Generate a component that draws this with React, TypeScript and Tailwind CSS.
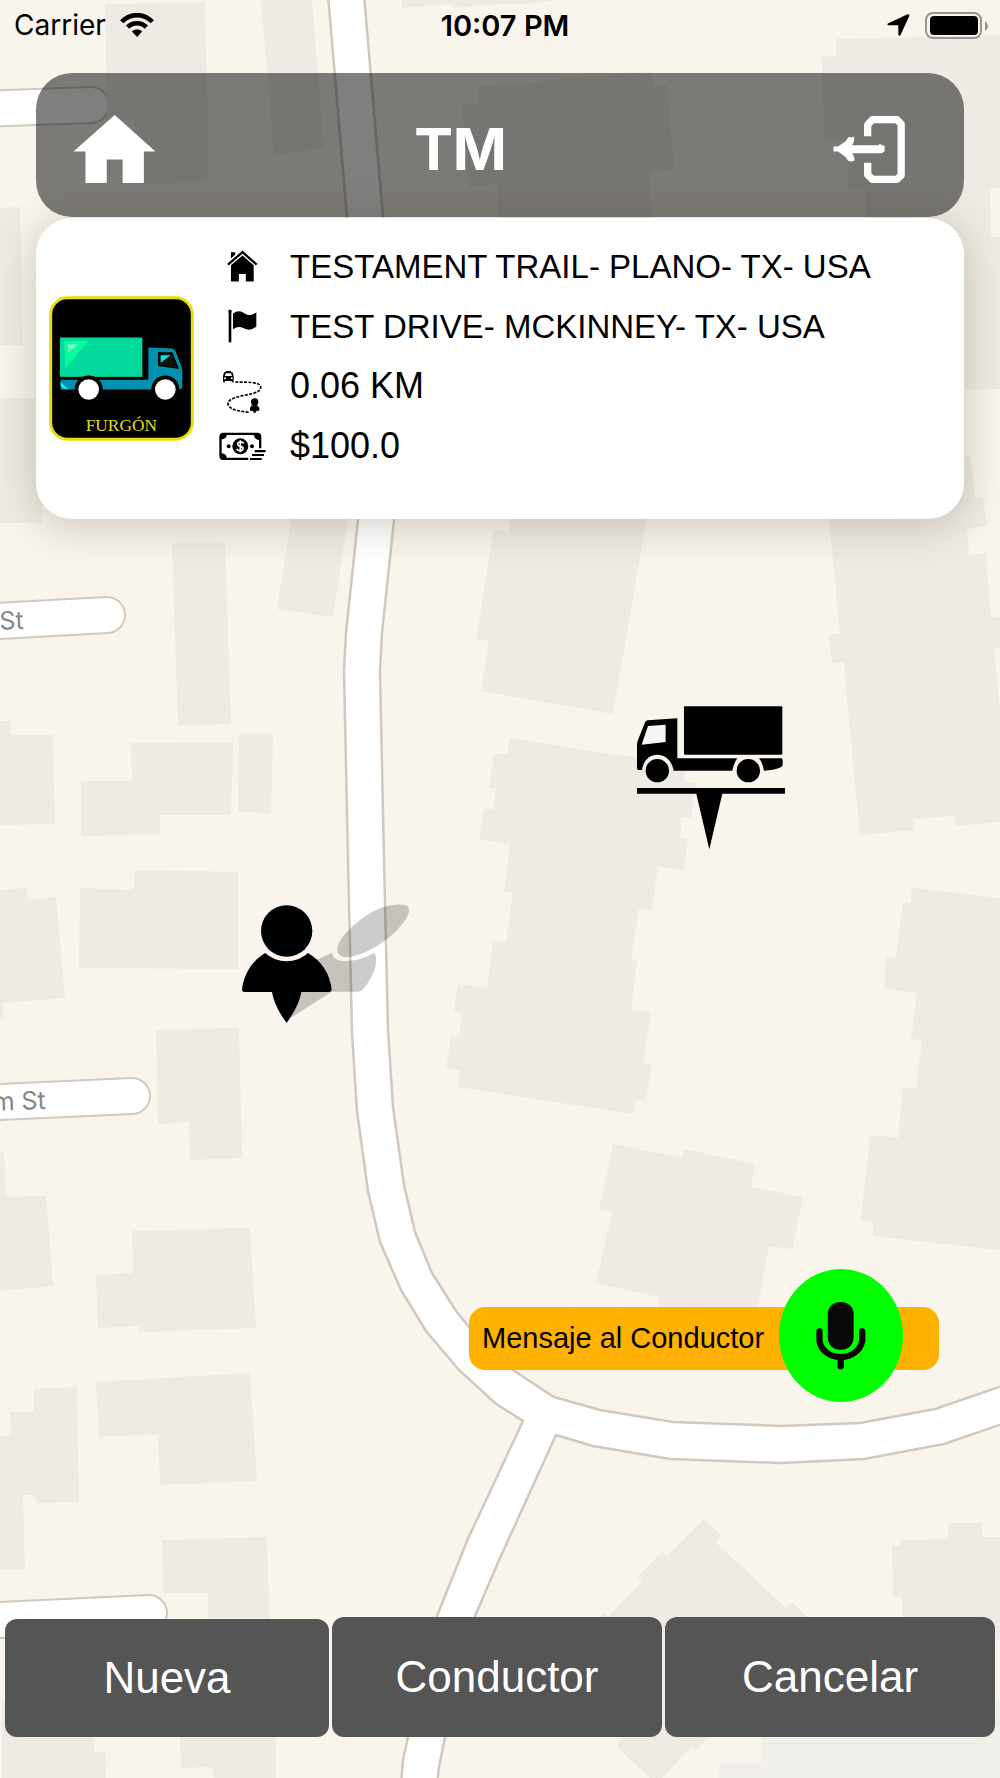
import type { ReactNode } from "react";

const BUILDINGS = [
  "105,4 205,2 209,182 136,184 134,119 107,120",
  "261,0 312,0 324,149 274,155",
  "0,208 20,207 23,345 0,345",
  "0,398 40,398 42,523 0,523",
  "402,0 402,8 452,4 453,8 484,5 535,3 555,0",
  "478,87 652,71 654,87 667,85 674,169 650,172 653,240 500,240 498,184 469,187 462,105 479,104",
  "836,39 1000,35 1000,188 990,189 991,237 1000,237 1000,389 865,389 865,189 849,190 848,139 824,139 822,57 836,56",
  "825,456 971,456 975,497 983,497 987,526 967,529 969,555 986,553 991,618 1000,617 1000,647 994,648 1000,710 1000,822 956,826 954,816 913,819 914,830 860,835 848,710 844,662 832,663 829,635 840,633 829,520",
  "494,530 509,532 511,510 648,510 613,714 481,691 489,641 476,639",
  "172,543 225,542 231,724 178,726",
  "293,510 349,510 333,617 277,609",
  "0,721 11,721 11,735 53,735 55,824 0,825",
  "131,743 233,742 231,815 160,815 160,834 81,836 81,781 132,781",
  "239,733 273,734 271,813 238,812",
  "80,888 134,890 135,870 238,872 238,969 79,968",
  "0,890 27,888 28,900 56,897 65,998 3,1003 3,1019 0,1019",
  "156,1030 239,1028 242,1158 190,1160 189,1122 158,1124",
  "509,738 637,758 686,766 684,781 696,783 691,818 682,817 680,838 688,839 684,870 658,866 652,910 639,909 631,959 637,960 631,1010 651,1012 643,1063 652,1064 646,1101 636,1100 633,1114 458,1087 460,1070 446,1068 451,1036 459,1036 463,1013 454,1012 458,984 487,988 493,941 506,943 513,892 504,891 510,844 479,839 484,808 493,810 496,789 489,788 494,754 508,754",
  "912,888 1000,898 1000,1250 873,1236 873,1222 861,1221 870,1135 898,1138 903,1088 916,1089 922,1040 911,1039 917,993 884,989 886,957 896,958 903,903 910,903",
  "613,1144 683,1158 684,1149 755,1164 751,1187 803,1197 792,1249 769,1246 756,1317 656,1317 659,1297 596,1283 612,1212 599,1210",
  "704,1519 721,1535 715,1542 786,1608 792,1602 830,1640 709,1737 696,1751 691,1747 662,1778 650,1778 617,1747 622,1737 590,1626 603,1613 608,1617 642,1582 637,1577 662,1552 667,1556",
  "948,1523 982,1523 982,1537 1000,1537 1000,1640 902,1640 902,1597 893,1597 892,1546 901,1546 900,1540 948,1539",
  "0,1152 4,1152 6,1197 46,1196 53,1286 0,1291",
  "132,1231 250,1228 256,1328 139,1332 139,1326 98,1328 96,1275 133,1273",
  "96,1382 250,1373 257,1481 160,1485 158,1434 99,1437",
  "34,1389 77,1387 79,1502 36,1503 35,1495 23,1495 25,1570 0,1570 0,1436 11,1436 10,1412 34,1412",
  "162,1540 267,1537 270,1640 208,1640 208,1593 163,1593",
  "2,1700 94,1700 94,1752 105,1752 106,1778 2,1778",
  "179,1700 275,1700 276,1778 214,1778 212,1767 181,1768",
];

const SIDE_STREETS = [
  "M-20 109 L91 105",
  "M-20 622 L107 615",
  "M-20 1103 L132 1096",
  "M-20 1621 L149 1613",
];

const MAIN_ROAD =
  "M328 -5 L347 217 L361 450 L358 520 L346 633 L344 671 L348 860 L352 1033 L357 1111 L368 1191 L380 1242 L401 1290 L426 1331 L459 1370 L495 1403 L523 1421 L467 1541 L437 1616 L408 1737 L403 1760 L401 1785 L437 1785 L439 1767 L445 1737 L475 1616 L500 1558 L556 1435 L593 1446 L670 1459 L781 1463 L864 1459 L944 1444 L1005 1423 L1005 1385 L935 1409 L860 1423 L781 1426 L673 1422 L600 1410 L554 1397 L513 1370 L469 1327 L456 1311 L432 1273 L415 1232 L404 1185 L393 1107 L388 1030 L384 860 L380 671 L382 633 L394 520 L398 450 L383 217 L364 -5 Z";

function PassengerPin() {
  return (
    <g transform="translate(200 860) scale(0.3333)">
      <g fill="#000" fillOpacity="0.2">
        <path d="M412 268 C414 240 450 200 497 168 C540 138 590 128 618 136 C640 148 620 180 590 212 C550 250 490 288 440 292 C420 292 412 282 412 268 Z" />
        <path d="M352 298 L396 278 C400 296 412 304 440 303 C470 302 500 292 522 279 C532 290 530 310 522 334 C512 358 498 378 490 388 Q484 395 472 395 H394 L272 474 L300 396 Z" />
      </g>
      <circle cx="260" cy="213" r="77" fill="#000103" />
      <path d="M196 279 C232 312 288 312 324 279 C364 302 390 342 395 388 Q395 396 387 396 H304 C298 430 280 460 260 489 C240 462 222 430 216 396 H134 Q126 396 126 388 C132 342 156 302 196 279 Z" fill="#000103" />
    </g>
  );
}

function TruckPin() {
  return (
    <g transform="translate(500 680) scale(0.3333)">
      <rect x="552" y="79" width="295" height="145" rx="3" />
      <path d="M443 121 L532 115 V235 H712 Q702 248 697 272 H521 C516 244 498 224 472 224 C446 224 430 244 426 270 H416 Q411 270 411 264 V196 Q411 186 415 178 L434 130 Q437 121 443 121 Z" />
      <path d="M777 235 H844 Q848 235 848 240 V254 Q848 259 842 262 Q820 272 792 272 Q788 248 777 235 Z" />
      <path d="M444 138 L497 134 V186 L425 194 Z" fill="#f5f5f5" />
      <circle cx="472" cy="272" r="35" />
      <circle cx="745" cy="272" r="35" />
      <path d="M411 324 H855 V341 H667 L628 508 L589 341 H411 Z" />
    </g>
  );
}

function MapCanvas() {
  return (
    <svg
      className="absolute inset-0 h-full w-full"
      viewBox="0 0 1000 1778"
      preserveAspectRatio="xMidYMin slice"
      role="img"
      aria-label="Mapa"
    >
      <rect width="1000" height="1778" fill="#f9f4ec" />
      <path d="M761 1700 H1000 V1778 H719 V1763 H761 Z" fill="#f0efe9" />
      {SIDE_STREETS.map((d) => (
        <g key={d} fill="none" strokeLinecap="round">
          <path d={d} stroke="#d2c8bd" strokeWidth="38" />
          <path d={d} stroke="#fff" strokeWidth="34" />
        </g>
      ))}
      <g fill="#efeae3">
        {BUILDINGS.map((points) => (
          <polygon key={points} points={points} />
        ))}
      </g>
      <path d={MAIN_ROAD} fill="#fff" stroke="#d2c8bd" strokeWidth="2.5" />
      <g fill="#858585" fontFamily="Inter, sans-serif" fontSize="25" textAnchor="end">
        <text x="24" y="629" transform="rotate(-2 24 629)">St</text>
        <text x="46" y="1109" transform="rotate(-2 46 1109)">m St</text>
      </g>
      <PassengerPin />
      <TruckPin />
    </svg>
  );
}

function StatusBar() {
  return (
    <div className="grid h-[50px] grid-cols-[1fr_auto_1fr] items-center pl-2.5 text-[28px] leading-none text-black">
      <div className="flex items-center gap-3.5 pl-1">
        <span>Carrier</span>
        <svg className="h-6 w-[34px]" viewBox="362 36 103 73" aria-label="Wi-Fi">
          <path d="M362 58 C390 28 437 28 465 58 L455 67 C432 44 395 44 372 67 Z" />
          <path d="M380 74 C398 56 429 56 447 74 L437 84 C423 71 404 71 390 84 Z" />
          <path d="M398 92 C406 84 421 84 429 92 L414 109 Z" />
        </svg>
      </div>
      <span className="text-[29px] font-semibold">10:07 PM</span>
      <div className="flex items-center justify-end gap-[15px] pr-3">
        <svg className="h-[22px] w-[23px]" viewBox="1162 41 69 67" aria-label="Ubicación">
          <path d="M1166 69 L1224 42 Q1231 40 1229 48 L1203 104 Q1199 110 1196 104 V75 H1166 Q1159 73 1166 69 Z" />
        </svg>
        <svg className="h-[27px] w-[63px]" viewBox="0 0 63 27" aria-label="Batería">
          <rect x="1" y="1" width="55" height="25" rx="7" fill="none" stroke="#99968f" strokeWidth="2" />
          <rect x="5" y="4" width="48" height="19" rx="4" />
          <path d="M60 9 Q63 11 63 14 Q63 17 60 19 Z" fill="#99968f" />
        </svg>
      </div>
    </div>
  );
}

function HeaderBar() {
  return (
    <header className="flex h-36 items-center rounded-[36px] bg-black/50 pt-2 pr-[59px] pl-[37px] text-white">
      <button type="button" aria-label="Inicio">
        <svg className="h-[68px] w-[83px]" viewBox="220 350 247 205" fill="currentColor">
          <path d="M344 350 L467 460 H432 V555 H368 V484 H320 V555 H256 V460 H220 Z" />
        </svg>
      </button>
      <h1 className="flex-1 pr-[68px] text-center text-[58px] leading-none font-bold">TM</h1>
      <button type="button" aria-label="Salir">
        <svg className="h-[67px] w-[72px]" viewBox="1000 350 216 202">
          <path
            d="M1104 411 V376 L1118 361 H1192 L1205 374 V529 L1192 541 H1118 L1104 527 V491"
            fill="none"
            stroke="currentColor"
            strokeWidth="22"
            strokeLinejoin="round"
          />
          <path d="M1048 438 H1136 L1141 434 L1147 438 L1155 440 V456 L1147 462 H1048 Z" fill="currentColor" />
          <path
            d="M1001 442 H1014 L1038 426 L1046 413 L1056 415 L1063 412 V426 L1054 444 V455 L1064 476 V485 L1054 487 L1045 485 L1038 474 L1015 457 H1001 Z"
            fill="currentColor"
          />
        </svg>
      </button>
    </header>
  );
}

function VehicleTile() {
  return (
    <svg className="h-[145px] w-[145px] shrink-0" viewBox="145 258 435 434" role="img" aria-label="Furgón">
      <rect x="150" y="263" width="425" height="424" rx="50" fill="#000" stroke="#e9dd0c" strokeWidth="9" />
      <rect x="178" y="382" width="247" height="118" fill="#02d99d" />
      <path d="M191 392 H263 L193 476 Z" fill="#05ff9c" />
      <path d="M201 402 H233 L202 427 Z" fill="#7df5c6" />
      <path d="M443 412 L514 415 Q522 416 525 424 L545 478 V528 Q545 537 534 538 H180 V509 H443 Z" fill="#0191ae" />
      <path d="M180 514 Q192 532 205 537 Q184 537 180 526 Z" fill="#0ff" />
      <path d="M474 428 H514 L532 474 L474 466 Z" fill="#0a1408" stroke="#000" strokeWidth="4" />
      <path d="M480 435 H510 L480 458 Z" fill="#0fdcec" />
      <circle cx="264" cy="538" r="42" fill="#000" />
      <circle cx="494" cy="538" r="42" fill="#000" />
      <circle cx="264" cy="538" r="31" fill="#fff" />
      <circle cx="494" cy="538" r="31" fill="#fff" />
      <text x="362" y="663" textAnchor="middle" fontFamily="Liberation Serif, serif" fontSize="52" fill="#e6dc1e">
        FURGÓN
      </text>
    </svg>
  );
}

function HouseIcon() {
  return (
    <svg className="h-8 w-[31px]" viewBox="678 121 94 96" aria-hidden="true">
      <path d="M690 127 H703 V134 L690 146 Z" />
      <path d="M681 165 L725 127 L768 165" fill="none" stroke="#000" strokeWidth="7" />
      <path d="M725 137 L759 167 V216 H735 V193 H714 V216 H690 V167 Z" />
    </svg>
  );
}

function FlagIcon() {
  return (
    <svg className="h-[34px] w-[29px]" viewBox="683 302 87 101" aria-hidden="true">
      <circle cx="689" cy="308" r="5" />
      <rect x="685" y="308" width="8" height="94" rx="3" />
      <path d="M698 315 Q716 302 733 315 Q750 326 768 311 V354 Q750 370 730 359 Q714 350 698 362 Z" />
    </svg>
  );
}

function RouteIcon() {
  return (
    <svg className="h-[55px] w-10" viewBox="662 445 120 165" aria-hidden="true">
      <path d="M673 481 H689 V485 H694 L697 497 V515 H691 V511 H671 V515 H665 V497 L668 485 H673 Z" />
      <path d="M674 488 H689 L692 496 H670 Z" fill="#fff" />
      <circle cx="671" cy="503" r="3" fill="#fff" />
      <circle cx="691" cy="503" r="3" fill="#fff" />
      <path
        d="M702 514 C730 515 775 512 778 528 C780 548 745 550 715 557 C690 563 674 573 682 585 C692 600 720 602 745 605"
        fill="none"
        stroke="#000"
        strokeWidth="5"
        strokeDasharray="9 4"
      />
      <circle cx="760" cy="574" r="11" />
      <path d="M751 584 H768 L774 592 V600 H767 L760 608 L753 600 H746 V592 Z" />
    </svg>
  );
}

function CashIcon() {
  return (
    <svg className="h-[29px] w-[47px]" viewBox="655 658 141 87" aria-hidden="true">
      <path d="M782 707 V672 Q782 660 770 660 H668 Q656 660 656 672 V730 Q656 742 668 742 H743 V735 H678 Q677 723 663 722 V680 Q677 679 678 667 H760 Q761 680 775 682 V707 Z" />
      <circle cx="719" cy="701" r="24" />
      <circle cx="684" cy="701" r="6" />
      <circle cx="754" cy="701" r="6" />
      <path
        d="M729 692 Q724 687 718 688 Q710 689 711 695 Q712 700 719 701 Q728 703 727 709 Q725 715 718 714 Q712 714 708 709 M719 683 V719"
        fill="none"
        stroke="#fff"
        strokeWidth="5"
      />
      <path d="M762 712 H795 V719 H762 Z M754 724 H790 V730 H754 Z M748 736 H783 V742 H748 Z" />
    </svg>
  );
}

function TripRow({ icon, size, children }: { icon: ReactNode; size: string; children: ReactNode }) {
  return (
    <li className="flex h-[60px] items-center gap-6">
      <span className="flex w-12 shrink-0 items-center justify-center">{icon}</span>
      <span className={`leading-none whitespace-nowrap ${size}`}>{children}</span>
    </li>
  );
}

function TripCard() {
  return (
    <section className="mt-px flex items-center rounded-[36px] bg-white pl-[13px] text-black shadow-[0_6px_40px_rgba(60,50,30,0.24)]">
      <VehicleTile />
      <ul className="ml-6 pt-[18px] pb-[43px] font-['Liberation_Sans',sans-serif]">
        <TripRow icon={<HouseIcon />} size="text-[33px]">TESTAMENT TRAIL- PLANO- TX- USA</TripRow>
        <TripRow icon={<FlagIcon />} size="text-[33px]">TEST DRIVE- MCKINNEY- TX- USA</TripRow>
        <TripRow icon={<RouteIcon />} size="text-[36px]">0.06 KM</TripRow>
        <TripRow icon={<CashIcon />} size="text-[36px]">$100.0</TripRow>
      </ul>
    </section>
  );
}

function VoiceMessage() {
  return (
    <div className="mr-[61px] mb-[247px] flex h-[63px] items-center self-end rounded-2xl bg-[#ffb100] pr-9 pl-[13px] font-['Liberation_Sans',sans-serif]">
      <span className="w-[297px] text-[29px] leading-none whitespace-nowrap text-black">Mensaje al Conductor</span>
      <button
        type="button"
        aria-label="Grabar mensaje"
        className="-mt-[38px] -mb-8 flex h-[133px] w-[124px] items-center justify-center rounded-[50%] bg-[#00ff00]"
      >
        <svg className="h-[69px] w-[52px]" viewBox="950 515 154 208">
          <rect x="987" y="518" width="78" height="144" rx="36" fill="#0a0708" />
          <path
            d="M962 607 V634 C966 663 992 684 1026 684 C1060 684 1086 663 1091 634 V607 M1026 684 V712"
            fill="none"
            stroke="#0a0208"
            strokeWidth="19"
            strokeLinecap="round"
          />
        </svg>
      </button>
    </div>
  );
}

function ActionBar() {
  const button = "rounded-[12px] bg-[#555] text-[44px] leading-none text-white";
  return (
    <nav className="grid grid-cols-[325fr_331fr_331fr] items-end gap-[3px] px-[5px] pb-[41px] font-['Liberation_Sans',sans-serif]">
      <button type="button" className={`${button} h-[118px]`}>Nueva</button>
      <button type="button" className={`${button} h-[120px]`}>Conductor</button>
      <button type="button" className={`${button} h-[120px]`}>Cancelar</button>
    </nav>
  );
}

export default function App() {
  return (
    <div className="relative min-h-screen overflow-hidden bg-[#f9f4ec] font-['Inter',sans-serif]">
      <MapCanvas />
      <div className="relative flex min-h-screen flex-col">
        <StatusBar />
        <main className="flex flex-1 flex-col">
          <div className="mt-[23px] px-9">
            <HeaderBar />
            <TripCard />
          </div>
          <div className="flex-1" />
          <VoiceMessage />
        </main>
        <ActionBar />
      </div>
    </div>
  );
}
